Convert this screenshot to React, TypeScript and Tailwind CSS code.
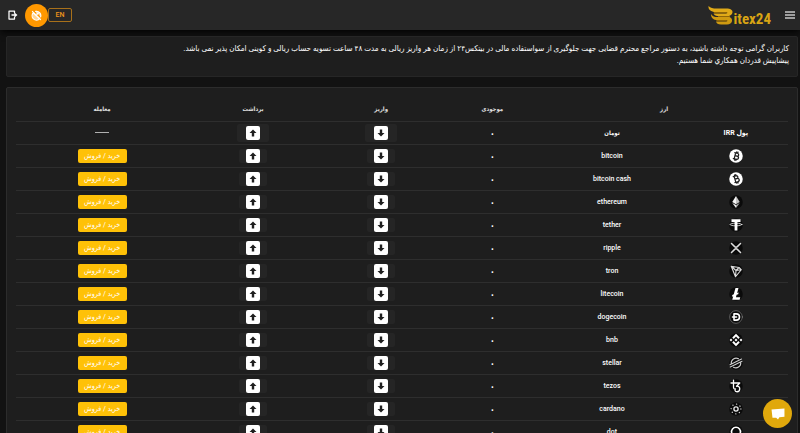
import type { ReactNode } from "react";

const strokeProps = {
  fill: "none",
  stroke: "currentColor",
  strokeLinecap: "round" as const,
  strokeLinejoin: "round" as const,
};

function Coin({ disc = "#0a0a0a", children }: { disc?: string; children: ReactNode }) {
  return (
    <svg viewBox="0 0 28 28" className="mx-auto block size-[14px] text-white" aria-hidden="true">
      <circle cx="14" cy="14" r="13.5" fill={disc} />
      {children}
    </svg>
  );
}

const letterB =
  "M10 8h5.2c2.2 0 3.6 1 3.6 2.9s-1.4 2.8-3.4 2.8h-3.6 4.1c2.4 0 3.9 1.1 3.9 3.2s-1.6 3.3-4 3.3H10M11.8 8v12M13.4 5.5v2.4M16 5.5v2.4M13.4 20.3v2.4M16 20.3v2.4";

const coins: Record<string, ReactNode> = {
  bitcoin: (
    <Coin disc="#fff">
      <path d={letterB} transform="rotate(14 14 14)" {...strokeProps} stroke="#1e1e1e" strokeWidth="2.5" />
    </Coin>
  ),
  "bitcoin cash": (
    <Coin disc="#fff">
      <path d={letterB} transform="rotate(-16 14 14)" {...strokeProps} stroke="#1e1e1e" strokeWidth="2.5" />
    </Coin>
  ),
  ethereum: (
    <Coin>
      <path d="M14 2 6.5 14.2 14 18.5Z" fill="#f5f5f5" />
      <path d="M14 2l7.500 12.200L14 18.500Z" fill="#c4c4c4" />
      <path d="M6.500 16 14 26V20.200Z" fill="#eee" />
      <path d="M21.500 16 14 26V20.200Z" fill="#aaa" />
    </Coin>
  ),
  tether: (
    <Coin>
      <path d="M5 2.500h18v5.500h-6.200V25h-5.600V8H5Z" fill="currentColor" />
      <ellipse cx="14" cy="13" rx="12" ry="2.600" {...strokeProps} strokeWidth="1.500" />
    </Coin>
  ),
  ripple: (
    <Coin>
      <path
        d="M5 5l5.800 5.800c1.800 1.800 4.600 1.800 6.400 0L23 5M5 23l5.800-5.800c1.800-1.800 4.600-1.800 6.400 0L23 23"
        {...strokeProps}
        stroke="#ddd"
        strokeWidth="3"
      />
    </Coin>
  ),
  tron: (
    <Coin>
      <path
        d="M4.500 4.500 20 7l4.500 4.500L13 25.500ZM4.500 4.500l9.500 8.500L20 7M14 13l10.500-1.500M14 13l-1 12.500"
        {...strokeProps}
        stroke="#ddd"
        strokeWidth="2.200"
      />
    </Coin>
  ),
  litecoin: (
    <Coin>
      <path d="M13 2h6l-2.700 10 3-1.200-.9 3.600-3.200 1.300-1.300 4.800H22.500L21.200 25.500H6.500l1.900-7-2.600 1 .9-3.600 2.800-1.200Z" fill="currentColor" />
    </Coin>
  ),
  dogecoin: (
    <Coin>
      <circle cx="14" cy="14" r="12.700" {...strokeProps} stroke="#999" strokeWidth="1.200" />
      <path d="M10 7.800h4.500c4 0 6.500 2.500 6.500 6.200s-2.500 6.200-6.500 6.200H10ZM7 14h8" {...strokeProps} strokeWidth="3.200" />
    </Coin>
  ),
  bnb: (
    <Coin>
      <path
        d="M14 1.500 21.500 9l-2.800 2.800L14 7.200l-4.700 4.600L6.500 9ZM14 26.500 6.500 19l2.800-2.800 4.700 4.600 4.700-4.600 2.800 2.800ZM14 11l3 3-3 3-3-3ZM4 11.200 6.800 14 4 16.800 1.200 14ZM24 11.200l2.800 2.800-2.800 2.800-2.800-2.800Z"
        fill="currentColor"
      />
    </Coin>
  ),
  stellar: (
    <Coin>
      <path
        d="M4.500 15A9.800 9.800 0 0 1 19 5.500M23.500 13A9.800 9.800 0 0 1 9 22.500M2 17.500 25 6M2.500 22 26 10.500"
        {...strokeProps}
        stroke="#ccc"
        strokeWidth="2.200"
      />
    </Coin>
  ),
  tezos: (
    <Coin>
      <path
        d="M9 2.500V16c0 3 1.500 4.500 4 4M4 8h17.500L15 14.500c4-.5 6.500 1.500 6.500 5s-2.500 6-5.500 6c-2.500 0-4-1.500-4-3"
        {...strokeProps}
        strokeWidth="2.600"
      />
    </Coin>
  ),
  cardano: (
    <Coin>
      <circle cx="14" cy="14" r="4.200" {...strokeProps} stroke="#eee" strokeWidth="2.600" />
      <circle cx="14" cy="14" r="9.800" {...strokeProps} stroke="#ccc" strokeWidth="2.800" strokeDasharray="0.1 7.597" />
    </Coin>
  ),
  dot: (
    <Coin>
      <path d="M10 21.500A9 9 0 1 1 18 21.500M14 18v7" {...strokeProps} strokeWidth="3.200" />
    </Coin>
  ),
};

function Arrow({ up, large, label }: { up?: boolean; large?: boolean; label: string }) {
  return (
    <button
      type="button"
      aria-label={label}
      className={`mx-auto flex items-center justify-center rounded-xs bg-[#252525] ${large ? "h-[18px] w-8" : "h-[14px] w-7"}`}
    >
      <span className="flex size-[14px] items-center justify-center rounded-xs bg-white">
        <svg viewBox="0 0 8 8" className={`size-2 text-[#1e1e1e] ${up ? "" : "rotate-180"}`} aria-hidden="true">
          <path d="M4 .500 7.500 4H5.200v3.500H2.800V4H.500Z" fill="currentColor" />
        </svg>
      </span>
    </button>
  );
}

function Logo() {
  return (
    <a href="#home" dir="ltr" aria-label="Bitex24" className="flex h-5 items-end text-[#d9a514]">
      <svg viewBox="0 0 52 38" className="h-[19px] w-[26px]" aria-hidden="true">
        <path d="M1 0c4 4 9 5 16 5h22c10 0 13 8 7 13l-4 2H22c-6 0-9-1-11-5h25c2 0 3-3 0-3H15C6 12 0 7 1 0Z" fill="#e0aa18" />
        <path d="M6 16c3 5 7 6 13 6h24c8 3 7 15-5 15H26c-6 0-9-2-10-6h20c3 0 3-3 0-3H19c-8 0-13-4-13-12Z" fill="#cf9a10" />
        <path d="M11 12h25c4 0 4 3 0 3H13ZM16 28h20c4 0 4 3 0 3H18ZM20 20h24v2H20Z" fill="#8f6608" />
      </svg>
      <span className="font-['Liberation_Sans_Narrow','Roboto_Condensed','DejaVu_Sans_Condensed',sans-serif] text-[15px] leading-3 font-bold">
        itex24
      </span>
    </a>
  );
}

const names = Object.keys(coins);

export default function App() {
  return (
    <div
      dir="rtl"
      className="min-h-screen bg-[#121212] font-['Roboto','DejaVu_Sans_Condensed','DejaVu_Sans',sans-serif] text-white"
    >
      <header className="flex h-[30px] items-center bg-[#272727] px-[5px] shadow-md shadow-black/60">
        <button type="button" aria-label="منو" className="text-[#c8c8c8]">
          <svg viewBox="0 0 10 8" className="h-2 w-[10px]" aria-hidden="true">
            <path d="M0 1h10M0 4h10M0 7h10" stroke="currentColor" strokeWidth="1.500" />
          </svg>
        </button>
        <div className="ms-[14px]">
          <Logo />
        </div>
        <div className="ms-auto flex items-center">
          <button
            type="button"
            className="h-[14px] w-6 rounded-xs border border-[#a8701a] text-[7px] leading-3 font-medium text-[#f0951a]"
          >
            EN
          </button>
          <button
            type="button"
            aria-label="تغییر پوسته"
            className="flex size-[23px] items-center justify-center rounded-full bg-[#ff9800]"
          >
            <svg viewBox="0 0 24 24" className="size-[11px] text-white" aria-hidden="true">
              <path d="M5 6a9.500 9.500 0 1 0 14 13ZM10 3a9.500 9.500 0 0 1 11 12" {...strokeProps} fill="#ffd699" strokeWidth="2.500" />
              <path d="M3 3l18 18M13 3v6M17 6l-4 4" {...strokeProps} strokeWidth="2.200" />
            </svg>
          </button>
          <button type="button" aria-label="خروج" className="ms-[7px] me-[3px] text-white">
            <svg viewBox="0 0 20 20" className="size-[10px]" aria-hidden="true">
              <path d="M13 6V2H2v16h11v-4" {...strokeProps} strokeWidth="2.500" />
              <path d="M7 8.500h6V5l6 5-6 5v-3.500H7Z" fill="currentColor" />
            </svg>
          </button>
        </div>
      </header>

      <main className="flex flex-col gap-[10px] pt-[6px] pr-[2px] pb-4 pl-[6px]">
        <section className="rounded-xs border border-[#262626] bg-[#1e1e1e] px-2 pt-[6px] pb-[9px] text-[8px] leading-3">
          <p>
            کاربران گرامی توجه داشته باشید، به دستور مراجع محترم قضایی جهت جلوگیری از سواستفاده مالی در بیتکس۲۴ از زمان هر واریز ریالی به مدت ۴۸ ساعت تسویه حساب ریالی و کوینی امکان پذیر نمی باشد.
          </p>
          <p>پیشاپیش قدردان همکاري شما هستیم.</p>
        </section>

        <section className="rounded-xs border border-[#2c2c2c] bg-[#1e1e1e] px-[9px] pt-[9px] pb-4">
          <table className="w-full table-fixed border-collapse text-center text-[7px] leading-3">
            <colgroup>
              <col className="w-[13.500%]" />
              <col className="w-[18.600%]" />
              <col className="w-[12.400%]" />
              <col className="w-[16.400%]" />
              <col className="w-[16.800%]" />
              <col />
            </colgroup>
            <thead>
              <tr className="h-6 border-b border-[#2e2e2e] text-[6px] text-[#e0e0e0]">
                <th colSpan={2}>ارز</th>
                <th>موجودی</th>
                <th>واریز</th>
                <th>برداشت</th>
                <th>معامله</th>
              </tr>
            </thead>
            <tbody>
              <tr className="h-[23px] border-b border-[#2e2e2e]">
                <td className="p-0 font-bold">پول IRR</td>
                <td className="p-0 text-[6px] font-bold">تومان</td>
                <td className="p-0 text-[14px]">۰</td>
                <td className="p-0">
                  <Arrow large label="واریز تومان" />
                </td>
                <td className="p-0">
                  <Arrow up large label="برداشت تومان" />
                </td>
                <td className="p-0">
                  <span className="mx-auto block h-px w-[14px] bg-[#b0b0b0]" />
                </td>
              </tr>
              {names.map((name) => (
                <tr key={name} className="h-[23px] border-b border-[#2e2e2e]">
                  <td className="p-0">{coins[name]}</td>
                  <td className="p-0 font-medium">{name}</td>
                  <td className="p-0 text-[14px]">۰</td>
                  <td className="p-0">
                    <Arrow label={`واریز ${name}`} />
                  </td>
                  <td className="p-0">
                    <Arrow up label={`برداشت ${name}`} />
                  </td>
                  <td className="p-0">
                    <button
                      type="button"
                      className="mx-auto block h-[14px] w-[49px] rounded-xs bg-[#ffc107] text-[7px] leading-3 text-white"
                    >
                      خرید / فروش
                    </button>
                  </td>
                </tr>
              ))}
            </tbody>
          </table>
        </section>
      </main>

      <button
        type="button"
        aria-label="گفتگو"
        className="fixed right-2 bottom-[5px] flex size-[29px] items-center justify-center rounded-full bg-[#e0a80c]"
      >
        <svg viewBox="0 0 30 26" className="h-3 w-[14px]" aria-hidden="true">
          <path d="M1 3 29 1v18l-11 1-3 5-4-4H3Z" fill="#fff" />
        </svg>
      </button>
    </div>
  );
}
